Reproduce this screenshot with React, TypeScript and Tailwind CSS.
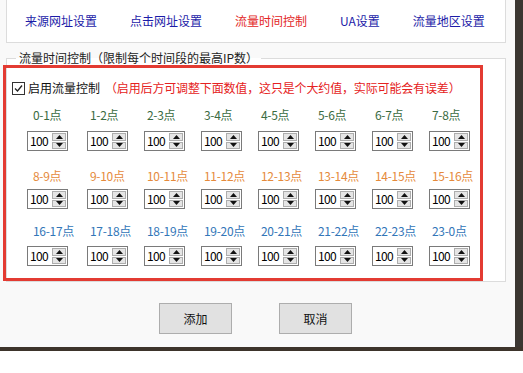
import React from "react";

const rows = [
  { color: "text-[#3a6b42]", labels: ["0-1点", "1-2点", "2-3点", "3-4点", "4-5点", "5-6点", "6-7点", "7-8点"], labelTop: "mt-[13px]", spinTop: "mt-[9px]" },
  { color: "text-[#e58a3c]", labels: ["8-9点", "9-10点", "10-11点", "11-12点", "12-13点", "13-14点", "14-15点", "15-16点"], labelTop: "mt-[18px]", spinTop: "mt-[6px]" },
  { color: "text-[#3276b8]", labels: ["16-17点", "17-18点", "18-19点", "19-20点", "20-21点", "21-22点", "22-23点", "23-0点"], labelTop: "mt-[15px]", spinTop: "mt-[8px]" },
];

const tabs = [
  { label: "来源网址设置", active: false },
  { label: "点击网址设置", active: false },
  { label: "流量时间控制", active: true },
  { label: "UA设置", active: false },
  { label: "流量地区设置", active: false },
];

function Spinner() {
  return (
    <div className="flex h-[20px] w-[41px] border border-[#7a7a7a] bg-white">
      <div className="flex-1 pl-[2px] text-[12px] leading-[18px] tracking-[-0.6px] text-black">100</div>
      <div className="flex w-[16px] flex-col gap-[1px] p-[1px]">
        <div className="flex flex-1 items-center justify-center border border-[#adadad] bg-[#e5e5e5]">
          <svg width="7" height="4" viewBox="0 0 7 4">
            <path d="M0 4 L3.5 0 L7 4 Z" fill="#111" />
          </svg>
        </div>
        <div className="flex flex-1 items-center justify-center border border-[#adadad] bg-[#e5e5e5]">
          <svg width="7" height="4" viewBox="0 0 7 4">
            <path d="M0 0 L7 0 L3.5 4 Z" fill="#111" />
          </svg>
        </div>
      </div>
    </div>
  );
}

export default function App() {
  return (
    <div
      className="flex h-[373px] w-[523px] flex-col overflow-hidden bg-white"
      style={{ fontFamily: '"Noto Sans CJK SC", "Noto Sans", sans-serif' }}
    >
      <div className="flex h-[347px]">
        <div className="relative h-full w-[515px] bg-[#f9f9f9]">
          {/* tab links */}
          <div className="ml-[6px] flex h-[43px] w-[500px] items-center gap-[33px] border-x border-b border-[#dcdcdc] bg-white pl-[18px] text-[12px] leading-[14px]">
            {tabs.map((t) => (
              <span key={t.label} className={t.active ? "text-[#e32626]" : "text-[#1c1ca8]"}>
                {t.label}
              </span>
            ))}
          </div>

          {/* time control group */}
          <fieldset className="ml-[6px] mt-[8px] w-[500px] border border-[#dcdcdc] bg-white pb-[15px] pl-[5px]">
            <legend className="ml-[4px] px-[3px] text-[12px] leading-[14px] text-[#222]">
              流量时间控制（限制每个时间段的最高IP数）
            </legend>
            <div className="mt-[16px] flex items-center text-[12px] leading-[14px]">
              <span className="flex h-[13px] w-[13px] items-center justify-center border border-[#333] bg-white">
                <svg width="9" height="9" viewBox="0 0 9 9">
                  <path d="M1 4.5 L3.5 7 L8 1.5" fill="none" stroke="#222" strokeWidth="1.3" />
                </svg>
              </span>
              <span className="ml-[3px] text-[#111]">启用流量控制</span>
              <span className="ml-[5px] tracking-[-0.15px] text-[#e52222]">（启用后方可调整下面数值，这只是个大约值，实际可能会有误差）</span>
            </div>

            {rows.map((row, r) => (
              <div key={r} className="pl-[15px]">
                <div className={`grid grid-cols-[60px_repeat(7,57px)] text-[12px] leading-[14px] tracking-[-0.3px] ${row.labelTop} ${row.color}`}>
                  {row.labels.map((l, i) => (
                    <span key={l} className={i === 0 ? "pl-[6px]" : "pl-[3px]"}>
                      {l}
                    </span>
                  ))}
                </div>
                <div className={`grid grid-cols-[60px_repeat(7,57px)] ${row.spinTop}`}>
                  {row.labels.map((l) => (
                    <Spinner key={l} />
                  ))}
                </div>
              </div>
            ))}
          </fieldset>

          {/* actions */}
          <div className="mt-[21px] flex gap-[47px] pl-[159px]">
            <button className="h-[31px] w-[73px] border border-[#adadad] bg-[#e1e1e1] text-[12px] text-[#111]">添加</button>
            <button className="h-[31px] w-[73px] border border-[#adadad] bg-[#e1e1e1] text-[12px] text-[#111]">取消</button>
          </div>

          {/* red annotation box */}
          <div className="pointer-events-none absolute left-[3px] top-[65px] h-[216px] w-[480px] border-[3px] border-[#e33b32]" />
        </div>
        <div className="h-full flex-1 bg-[#3b3631]" />
      </div>
      <div className="h-[4px] bg-[#3d342b]" />
    </div>
  );
}
